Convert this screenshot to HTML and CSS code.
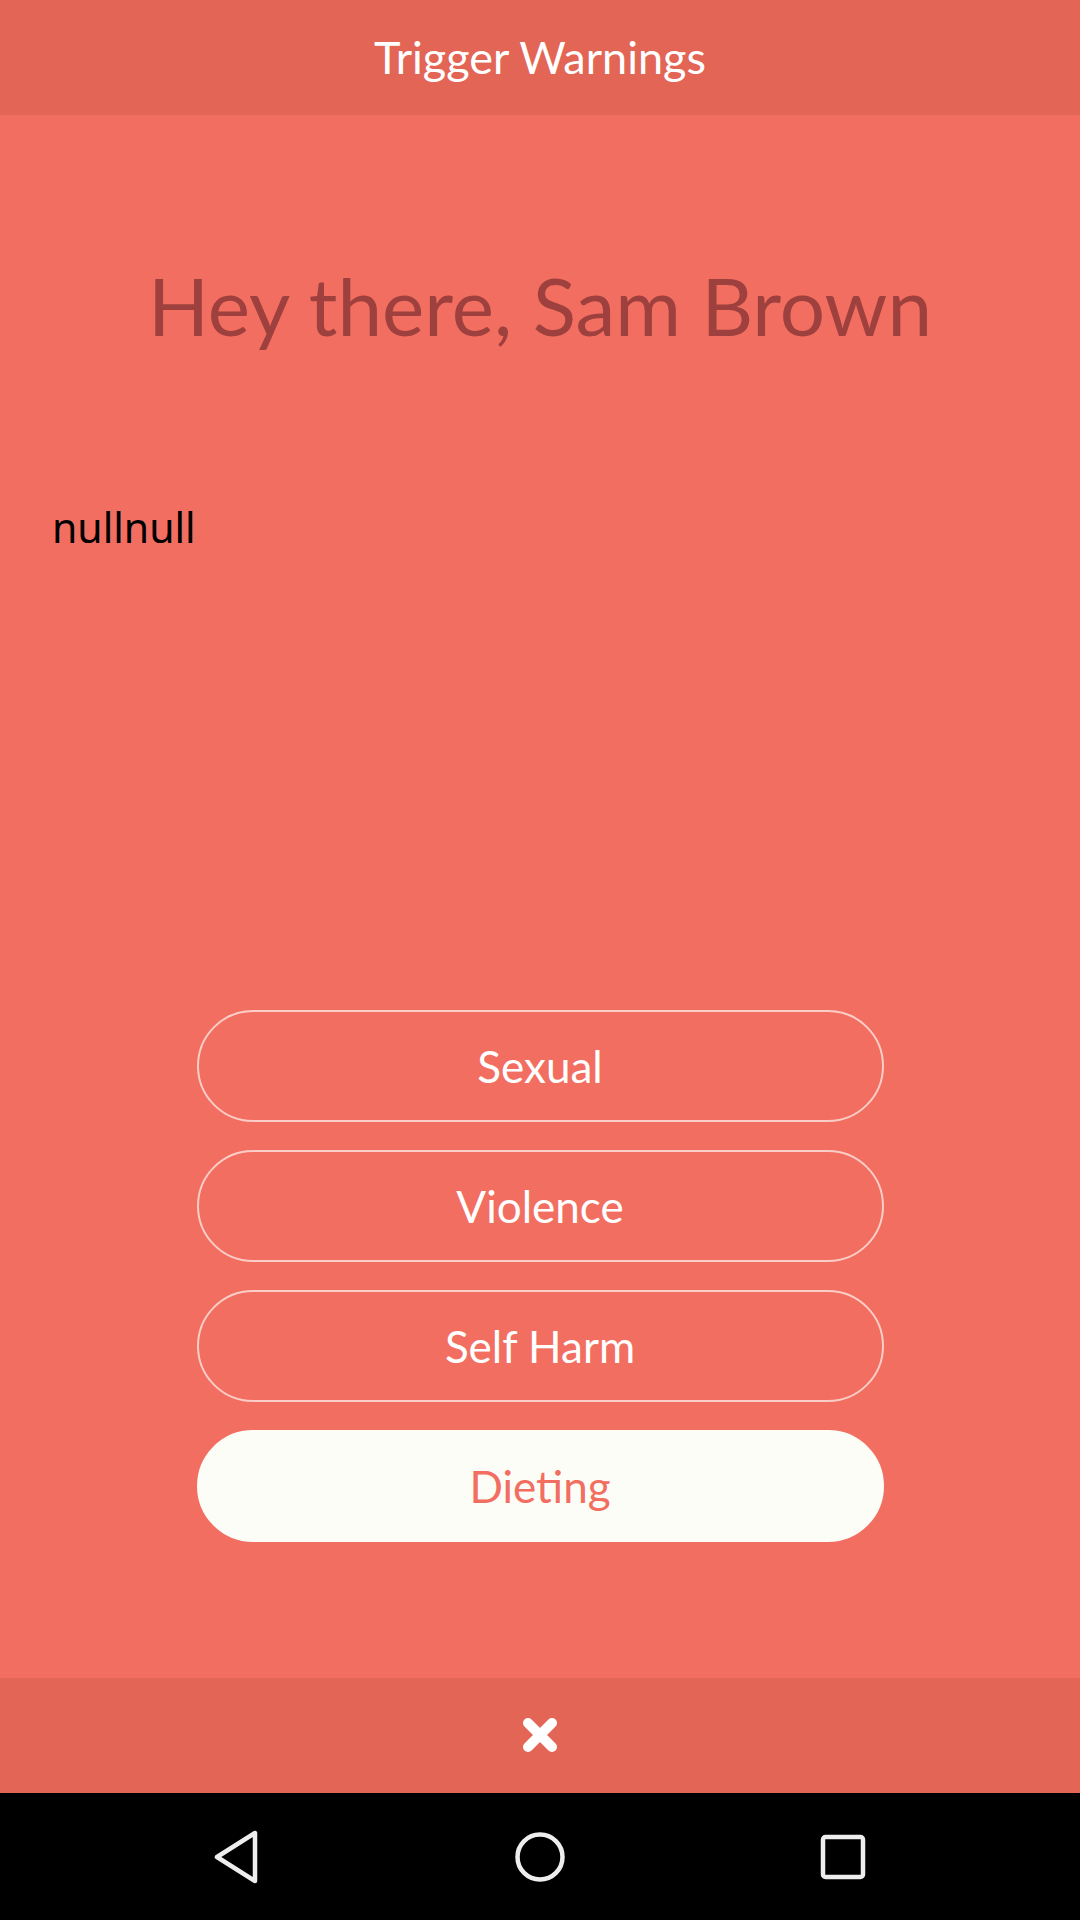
FILE: index.html
```html
<!DOCTYPE html>
<html lang="en">
<head>
<meta charset="utf-8">
<title>Trigger Warnings</title>
<link rel="stylesheet" href="styles.css">
</head>
<body>
<div class="screen">
  <header class="topbar">
    <h1 class="title">Trigger Warnings</h1>
  </header>
  <main class="content">
    <h2 class="greeting">Hey there, Sam Brown</h2>
    <p class="null-text">nullnull</p>
    <div class="options">
      <button class="option">Sexual</button>
      <button class="option">Violence</button>
      <button class="option">Self Harm</button>
      <button class="option option-selected">Dieting</button>
    </div>
  </main>
  <footer class="bottombar">
    <svg class="close-icon" width="36" height="34" viewBox="0 0 36 34">
      <path d="M6 5 L30 29 M30 5 L6 29" stroke="#fff" stroke-width="10" stroke-linecap="round" fill="none"/>
    </svg>
  </footer>
  <nav class="navbar">
    <div class="nav-item">
      <svg width="48" height="54" viewBox="0 0 48 54">
        <path d="M42 3 L42 51 L4 27 Z" stroke="#eee" stroke-width="4.5" stroke-linejoin="round" fill="none"/>
      </svg>
    </div>
    <div class="nav-item">
      <svg width="54" height="54" viewBox="0 0 54 54">
        <circle cx="27" cy="27" r="22.5" stroke="#eee" stroke-width="4.5" fill="none"/>
      </svg>
    </div>
    <div class="nav-item">
      <svg width="48" height="48" viewBox="0 0 48 48">
        <rect x="4" y="4" width="40" height="40" rx="2.5" stroke="#eee" stroke-width="4.5" fill="none"/>
      </svg>
    </div>
  </nav>
</div>
</body>
</html>
```

FILE: styles.css
```css
* {
  box-sizing: border-box;
}

html, body {
  margin: 0;
  padding: 0;
  background: #000;
}

.screen {
  width: 1080px;
  height: 1920px;
  display: flex;
  flex-direction: column;
  font-family: "Lato", "Open Sans", sans-serif;
}

.topbar {
  height: 115px;
  flex: 0 0 115px;
  background: #E36555;
  display: flex;
  align-items: center;
  justify-content: center;
}

.title {
  margin: 0;
  color: #fff;
  font-weight: 400;
  font-size: 45px;
  line-height: 1;
  letter-spacing: 0;
}

.content {
  flex: 1 1 auto;
  background: #F26E61;
  display: flex;
  flex-direction: column;
  padding: 150px 0 136px;
}

.greeting {
  margin: 0;
  text-align: center;
  color: #9E403E;
  font-weight: 400;
  font-size: 80px;
  line-height: 1;
}

.null-text {
  margin: 162px 0 0 52px;
  font-family: "Noto Sans", "Roboto", sans-serif;
  font-size: 41px;
  line-height: 1;
  color: #000;
}

.options {
  margin-top: auto;
  display: flex;
  flex-direction: column;
  align-items: center;
  gap: 28px;
}

.option {
  width: 687px;
  height: 112px;
  border-radius: 56px;
  border: 2px solid rgba(255, 238, 232, 0.75);
  background: transparent;
  color: #fff;
  font-family: "Lato", "Open Sans", sans-serif;
  font-size: 44px;
  font-weight: 400;
  padding: 0;
}

.option-selected {
  background: #FDFDF8;
  border-color: #FDFDF8;
  color: #F26E61;
}

.bottombar {
  height: 115px;
  flex: 0 0 115px;
  background: #E36555;
  display: flex;
  align-items: center;
  justify-content: center;
}

.close-icon {
  display: block;
  margin-top: -2px;
}

.navbar {
  height: 127px;
  flex: 0 0 127px;
  background: #000;
  display: flex;
  justify-content: center;
  align-items: center;
}

.nav-item {
  width: 303px;
  display: flex;
  justify-content: center;
  align-items: center;
}

.nav-item svg {
  display: block;
}
```
